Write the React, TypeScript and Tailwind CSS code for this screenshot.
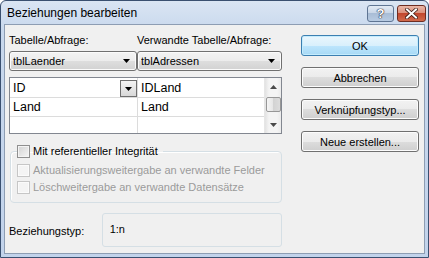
import React from "react";

function Tri({ color = "#000" }: { color?: string }) {
  return (
    <svg width="7" height="4" viewBox="0 0 7 4" className="shrink-0">
      <path d="M0 0H7L3.5 4Z" fill={color} />
    </svg>
  );
}

function TriUp({ color = "#4a4a4a" }: { color?: string }) {
  return (
    <svg width="7" height="4" viewBox="0 0 7 4" className="shrink-0">
      <path d="M0 4H7L3.5 0Z" fill={color} />
    </svg>
  );
}

function Combo({ value }: { value: string }) {
  return (
    <div className="flex items-center h-[20px] border border-[#707070] rounded-[3px] bg-[linear-gradient(#f3f3f3_0%,#ececec_50%,#dedede_50%,#d2d2d2_100%)] pl-[3px] pr-[6px] shadow-[inset_0_0_0_1px_#fbfbfb]">
      <span className="flex-1 truncate">{value}</span>
      <Tri />
    </div>
  );
}

function Btn({ label, def = false }: { label: string; def?: boolean }) {
  return (
    <div
      className={
        def
          ? "flex items-center justify-center h-[21px] border border-[#3c7fb1] rounded-[3px] bg-[linear-gradient(#eaf6fd_0%,#d9f0fc_50%,#bee6fd_50%,#a7d9f5_100%)] shadow-[inset_0_0_0_1px_#c4ecfd]"
          : "flex items-center justify-center h-[21px] border border-[#707070] rounded-[3px] bg-[linear-gradient(#f2f2f2_0%,#ebebeb_50%,#dddddd_50%,#cfcfcf_100%)] shadow-[inset_0_0_0_1px_#fcfcfc]"
      }
    >
      {label}
    </div>
  );
}

function Check({ disabled = false }: { disabled?: boolean }) {
  return (
    <div
      className={
        disabled
          ? "w-[13px] h-[13px] shrink-0 border border-[#c6c6c6] bg-[#f4f4f4] shadow-[inset_0_0_0_1px_#fbfbfb]"
          : "w-[13px] h-[13px] shrink-0 border border-[#8f8f8f] bg-[linear-gradient(135deg,#d2d2d2,#f6f6f6)] shadow-[inset_0_0_0_1px_#f4f4f4]"
      }
    />
  );
}

export default function App() {
  return (
    <div className="w-[429px] h-[258px] overflow-hidden bg-white font-['Liberation_Sans',Arial,sans-serif] text-[11px] leading-[14px] text-black">
      <div className="flex flex-col w-full h-full border border-[#3a5070] rounded-t-[6px] bg-[linear-gradient(#dae5f3,#c8d8ed_30px,#c2d3eb)]">
        {/* title bar */}
        <div className="flex items-center h-[23px] pl-[6px] pr-[2px]">
          <span className="text-[12px] leading-[16px] mt-[1px]">Beziehungen bearbeiten</span>
          <div className="ml-auto flex gap-[3px] mt-[1px]">
            <div className="w-[27px] h-[17px] rounded-[3px] border border-[#5f7593] bg-[linear-gradient(#e3ebf5_0%,#c6d4e6_50%,#a9bdd6_50%,#b8cbe2_100%)] flex items-center justify-center">
              <span className="text-[13px] leading-[13px] font-bold text-white [text-shadow:0_0_1px_#223,0_0_1px_#223,0_0_1px_#223]">?</span>
            </div>
            <div className="w-[29px] h-[17px] rounded-[3px] border border-[#6e2d22] bg-[linear-gradient(#eab7a8_0%,#d98d78_50%,#c2472e_50%,#d16a4c_100%)] flex items-center justify-center">
              <svg width="13" height="11" viewBox="0 0 13 11">
                <path d="M2 1.5L11 9.5M11 1.5L2 9.5" stroke="#3a1a14" strokeWidth="3.6" strokeLinecap="square" />
                <path d="M2 1.5L11 9.5M11 1.5L2 9.5" stroke="#ffffff" strokeWidth="2" strokeLinecap="square" />
              </svg>
            </div>
          </div>
        </div>
        {/* client */}
        <div className="flex-1 mx-[3px] mb-[3px] border border-[#8d9db3] bg-[#f0f0f0] flex pl-[4px]">
          {/* left column */}
          <div className="w-[273px] flex flex-col pt-[8px]">
            <div className="grid grid-cols-[128px_145px] h-[14px]">
              <span>Tabelle/Abfrage:</span>
              <span>Verwandte Tabelle/Abfrage:</span>
            </div>
            <div className="grid grid-cols-[128px_145px] mt-[4px]">
              <Combo value="tblLaender" />
              <Combo value="tblAdressen" />
            </div>
            {/* field grid */}
            <div className="mt-[6px] h-[57px] border border-[#828790] bg-white flex text-[12.5px] leading-[16px]">
              <div className="w-[127px] flex flex-col">
                <div className="h-[20px] border-b border-[#dcdcdc] flex items-end pl-[3px]">
                  <span className="flex-1 self-center">ID</span>
                  <div className="w-[17px] h-[17px] border border-[#6f6f6f] bg-[linear-gradient(#f4f4f4,#d8d8d8)] flex items-center justify-center">
                    <Tri />
                  </div>
                </div>
                <div className="h-[19px] border-b border-[#dcdcdc] flex items-center pl-[3px]">Land</div>
                <div className="flex-1" />
              </div>
              <div className="w-[1px] bg-[#dcdcdc]" />
              <div className="w-[126px] flex flex-col">
                <div className="h-[20px] border-b border-[#dcdcdc] flex items-center pl-[3px]">IDLand</div>
                <div className="h-[19px] border-b border-[#dcdcdc] flex items-center pl-[3px]">Land</div>
                <div className="flex-1" />
              </div>
              <div className="w-[17px] flex flex-col items-center bg-[linear-gradient(90deg,#e2e2e2,#f4f4f4_25%,#f4f4f4_75%,#ebebeb)] border-l border-[#e6e6e6]">
                <div className="h-[18px] flex items-center justify-center">
                  <TriUp />
                </div>
                <div className="w-[15px] h-[15px] mt-[1px] rounded-[2px] border border-[#979797] bg-[linear-gradient(90deg,#f5f5f5,#e4e4e4_50%,#d3d3d3_50%,#dcdcdc)]" />
                <div className="flex-1 flex items-end justify-center pb-[6px]">
                  <Tri color="#4a4a4a" />
                </div>
              </div>
            </div>
            {/* group box */}
            <fieldset className="mt-[10px] ml-[1px] w-[272px] border border-[#d5dfe5] rounded-[4px] pl-[6px] pb-[8px] shadow-[inset_1px_1px_0_#fff]">
              <legend className="flex items-center gap-[3px] pr-[5px] h-[14px]">
                <Check />
                <span>Mit referentieller Integrität</span>
              </legend>
              <div className="flex flex-col gap-[3px] mt-[5px] text-[#9b9b9b]">
                <div className="flex items-center gap-[3px] h-[14px]">
                  <Check disabled />
                  <span>Aktualisierungsweitergabe an verwandte Felder</span>
                </div>
                <div className="flex items-center gap-[3px] h-[14px]">
                  <Check disabled />
                  <span>Löschweitergabe an verwandte Datensätze</span>
                </div>
              </div>
            </fieldset>
            <div className="mt-[10px] flex items-center">
              <span className="w-[93px] mt-[2px]">Beziehungstyp:</span>
              <div className="w-[181px] h-[34px] border border-[#d5dfe5] rounded-[3px] pl-[7px] pt-[8px]">1:n</div>
            </div>
          </div>
          {/* right column */}
          <div className="ml-[19px] w-[118px] flex flex-col gap-[11px] pt-[10px]">
            <Btn label="OK" def />
            <Btn label="Abbrechen" />
            <Btn label="Verknüpfungstyp..." />
            <Btn label="Neue erstellen..." />
          </div>
        </div>
      </div>
    </div>
  );
}
